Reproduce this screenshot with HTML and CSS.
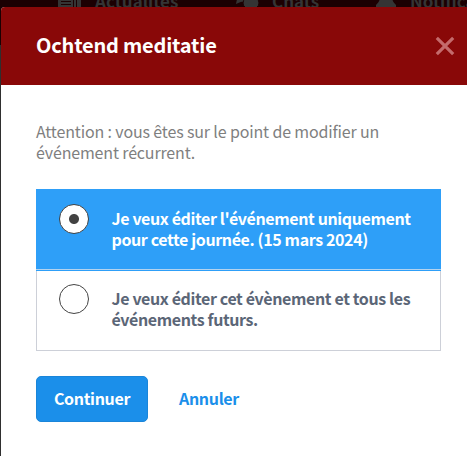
FILE: index.html
```
<!doctype html>
<html lang="fr">
<head>
<meta charset="utf-8">
<meta name="viewport" content="width=device-width, initial-scale=1.0">
<link rel="stylesheet" href="styles.css">
<title>Ochtend meditatie</title>
</head>
<body>
<div class="navbar">
	<span class="nav-item nav-news">
		<svg width="25" height="18" viewBox="0 0 25 18"><path d="M3 0H24V18H1V3H3Z" fill="#343434"/><path d="M4 12.500H14M4 15.500H14M16.500 10V18M19.500 10V18" stroke="#1b0002"/></svg>
		<span>Actualités</span>
	</span>
	<span class="nav-item nav-chats">
		<svg width="24" height="18" viewBox="0 0 24 18"><ellipse cx="9" cy="7" rx="8" ry="6" fill="#343434"/><path d="M2 10L1 15L8 12Z" fill="#343434"/><ellipse cx="16" cy="14" rx="8" ry="6.500" fill="#343434" stroke="#1b0002"/></svg>
		<span>Chats</span>
	</span>
	<span class="nav-item nav-notifs">
		<svg width="22" height="18" viewBox="0 0 22 18"><path d="M11 0C5 1 5 6 5 9C4.500 12 3 14 1 16V18H21V16C19 14 17.500 12 17 9C17 6 17 1 11 0Z" fill="#343434"/></svg>
		<span>Notifications</span>
	</span>
</div>

<div class="modal">
	<div class="modal-header">
		<h1>Ochtend meditatie</h1>
		<button class="close" type="button" aria-label="Fermer">
			<svg width="20" height="20" viewBox="0 0 20 20"><path d="M1.800 1.800L18.200 18.200M18.200 1.800L1.800 18.200" stroke="#c46b6c" stroke-width="3.200"/></svg>
		</button>
	</div>
	<div class="modal-body">
		<p class="notice">Attention : vous êtes sur le point de modifier un<br>événement récurrent.</p>
		<div class="options">
			<label class="option selected">
				<input type="radio" name="scope" checked>
				<span>Je veux éditer l'événement uniquement<br>pour cette journée. (15 mars 2024)</span>
			</label>
			<label class="option">
				<input type="radio" name="scope">
				<span>Je veux éditer cet évènement et tous les<br>événements futurs.</span>
			</label>
		</div>
		<div class="actions">
			<button class="btn btn-primary" type="button">Continuer</button>
			<button class="btn btn-link" type="button">Annuler</button>
		</div>
	</div>
</div>
</body>
</html>
```
FILE: styles.css
```
* {
	box-sizing: border-box;
}
body {
	margin: 0;
	height: 456px;
	overflow: hidden;
	font-family: "Noto Sans CJK SC", "Open Sans", sans-serif;
	font-size: 16px;
	line-height: 21px;
	color: #7f7f7f;
	background: linear-gradient(#1b0002 45px, #2f2f2f 45px);
}
h1,
p {
	margin: 0;
}
button {
	border: 0;
	padding: 0;
	font: inherit;
	background: none;
}

/* page behind the modal */
.navbar {
	display: flex;
	height: 7px;
	padding-left: 57px;
	overflow: hidden;
	align-items: flex-end;
	font-size: 17px;
	font-weight: bold;
	white-space: nowrap;
	color: #343434;
}
.nav-item {
	display: flex;
	flex: none;
	height: 16px;
	align-items: flex-end;
	line-height: 13px;
}
.nav-item svg {
	flex: none;
	margin-right: 13px;
}
.nav-news {
	width: 178px;
}
.nav-chats {
	width: 140px;
}

.modal {
	height: 449px;
	margin-left: 1px;
	border-radius: 4px 0 0 0;
	overflow: hidden;
	background: #fff;
}
.modal-header {
	display: flex;
	height: 78px;
	padding: 0 12px 0 35px;
	justify-content: space-between;
	align-items: center;
	background: #890808;
}
.modal-header h1 {
	padding-bottom: 2px;
	font-size: 20px;
	line-height: 24px;
	font-weight: bold;
	letter-spacing: -0.2px;
	color: #fff;
}
.close svg {
	display: block;
}
.modal-body {
	padding: 36px 26px 0 35px;
}
.notice {
	margin-bottom: 26px;
	letter-spacing: -0.15px;
}

.options {
	height: 162px;
	margin-bottom: 25px;
	border: 1px solid #cdd0d8;
	border-top: 0;
}
.option {
	display: flex;
	height: 80px;
	padding: 13px 0 0 22px;
	font-weight: bold;
	letter-spacing: -0.38px;
	color: #5b6677;
}
.option span {
	margin: 4px 0 0 22.5px;
	white-space: nowrap;
}
.option.selected {
	height: 82px;
	margin: 0 -1px;
	padding: 15px 0 0 23px;
	color: #fff;
	background: linear-gradient(#2e9ff8 80px, #b3d3ef 80px, #b3d3ef 81px, #2e9ff8 81px);
}
.option input {
	appearance: none;
	flex: none;
	width: 30px;
	height: 30px;
	margin: 0;
	border: 1px solid #444;
	border-radius: 50%;
	background: #fff;
}
.option input:checked {
	background: radial-gradient(circle, #424242 4.500px, #fff 5.500px);
}

.actions {
	display: flex;
}
.btn {
	height: 46px;
	padding-bottom: 2px;
	font-weight: bold;
	letter-spacing: -0.33px;
}
.btn-primary {
	width: 112px;
	border: 1px solid #1a85d9;
	border-radius: 5px;
	color: #fff;
	background: #1b8fea;
}
.btn-link {
	margin-left: 31px;
	color: #1b8fea;
}
```
